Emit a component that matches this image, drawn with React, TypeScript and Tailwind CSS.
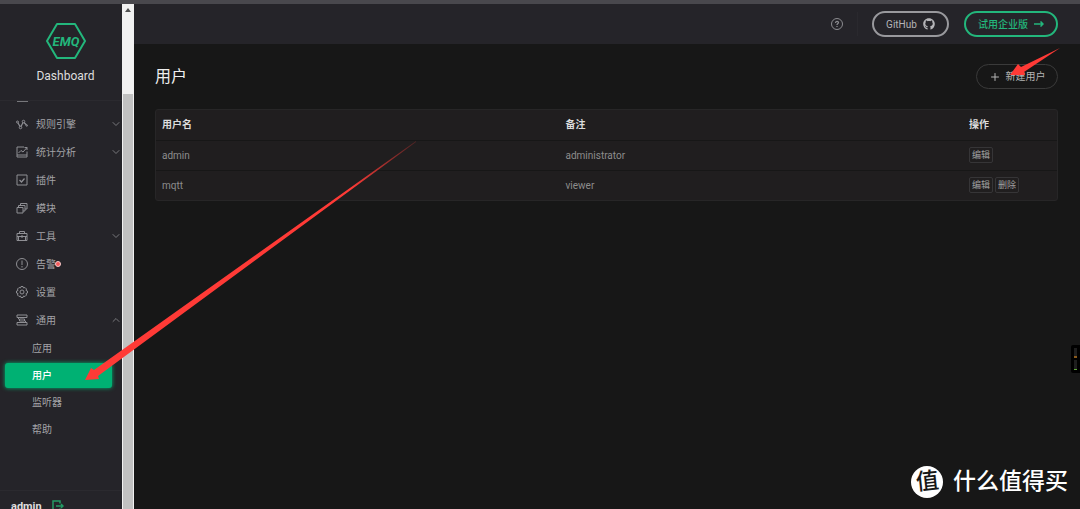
import type { ReactNode } from 'react';
import clsx from 'clsx';
import { ChevronDown, ChevronUp, Plus } from 'lucide-react';
import { FaGithub } from 'react-icons/fa';

interface MenuItem {
  label: string;
  icon: ReactNode;
  arrow?: 'down' | 'up';
  alarm?: boolean;
}

interface User {
  name: string;
  remark: string;
  actions: string[];
}

function Icon({ children }: { children: ReactNode }) {
  return (
    <svg
      viewBox="0 0 24 24"
      className="size-3 shrink-0 text-[#8f8f94]"
      fill="none"
      stroke="currentColor"
      strokeWidth={2}
      aria-hidden="true"
    >
      {children}
    </svg>
  );
}

const menu: MenuItem[] = [
  {
    label: '规则引擎',
    arrow: 'down',
    icon: (
      <Icon>
        <circle cx="3" cy="8" r="2" />
        <circle cx="9" cy="19" r="2.5" />
        <circle cx="15" cy="7" r="2.5" />
        <circle cx="21.5" cy="15" r="1.5" />
        <path d="M4 10l4 7M10 17l4-8M16 9l5 5" strokeWidth={2.5} />
      </Icon>
    ),
  },
  {
    label: '统计分析',
    arrow: 'down',
    icon: (
      <Icon>
        <path d="M16 2H2v20h20V11M2 18h20M5 14l5-5 4 3 8-9M17 3h5v5" />
      </Icon>
    ),
  },
  {
    label: '插件',
    icon: (
      <Icon>
        <path d="M2 2h20v20H2z" />
        <path d="M7 12l4 4 6-7" strokeWidth={2.5} />
      </Icon>
    ),
  },
  {
    label: '模块',
    icon: (
      <Icon>
        <path d="M2 11h12v11H2zM5 11V7h13v11h-4M9 7V3h13v11h-4" />
      </Icon>
    ),
  },
  {
    label: '工具',
    arrow: 'down',
    icon: (
      <Icon>
        <path d="M2 7h20v14H2zM7 7V3h10v4M2 13h20M12 10v6M5 13v8M19 13v8" />
      </Icon>
    ),
  },
  {
    label: '告警',
    alarm: true,
    icon: (
      <Icon>
        <circle cx="12" cy="12" r="11" />
        <path d="M12 5v9M12 16v3" />
      </Icon>
    ),
  },
  {
    label: '设置',
    icon: (
      <Icon>
        <path d="M9 4l1-3h4l1 3 3-1 3 3-1 3 3 1v4l-3 1 1 3-3 3-3-1-1 3h-4l-1-3-3 1-3-3 1-3-3-1v-4l3-1-1-3 3-3z" />
        <circle cx="12" cy="12" r="4" />
      </Icon>
    ),
  },
  {
    label: '通用',
    arrow: 'up',
    icon: (
      <Icon>
        <path d="M2 2h20v5H2zM2 17h20v5H2zM7 10h10v4H7zM5 7v3l3 2M19 17v-3l-3-2" />
      </Icon>
    ),
  },
];

const subMenu = ['应用', '用户', '监听器', '帮助'];

const users: User[] = [
  { name: 'admin', remark: 'administrator', actions: ['编辑'] },
  { name: 'mqtt', remark: 'viewer', actions: ['编辑', '删除'] },
];

function Logo() {
  return (
    <svg viewBox="0 0 40 36" className="h-9 w-10" role="img" aria-label="EMQ">
      <path
        d="M11 1h18L39 18 29 35H11L1 18z"
        fill="none"
        stroke="#23b77c"
        strokeWidth={2}
        strokeLinejoin="round"
      />
      <text x="20" y="23" textAnchor="middle" fill="#23b77c" className="text-[13px] font-bold italic">
        EMQ
      </text>
    </svg>
  );
}

function Sidebar() {
  return (
    <aside className="flex w-[122px] shrink-0 flex-col bg-[#252429]">
      <div className="flex h-[97px] shrink-0 flex-col items-center border-b border-[#2b2a2f] pt-[19px] pl-[9px]">
        <Logo />
        <div className="mt-2 text-[12px] leading-[18px] text-[#dedede]">Dashboard</div>
      </div>
      <nav className="flex-1 text-[10px] text-[#a3a3a7]">
        <div className="ml-[17px] h-px w-[11px] bg-[#77777b]" />
        <ul className="pt-2">
          {menu.map((item) => (
            <li key={item.label}>
              <a href="#" className="flex h-7 items-center pl-4">
                {item.icon}
                <span className="ml-2">{item.label}</span>
                {item.alarm && <i className="-ml-px size-[6px] rounded-full border border-[#f5c9c9] bg-[#f45b5b]" />}
                {item.arrow === 'down' && <ChevronDown className="ml-auto size-3 text-[#77777b]" />}
                {item.arrow === 'up' && <ChevronUp className="ml-auto size-3 text-[#77777b]" />}
              </a>
            </li>
          ))}
        </ul>
        <ul className="pt-px">
          {subMenu.map((label) => (
            <li key={label} className="flex h-[27px] items-center px-[5px]">
              <a
                href="#"
                className={clsx(
                  'flex h-[25px] w-[107px] items-center rounded-[3px] pl-[27px]',
                  label === '用户' && 'bg-[#00b173] font-medium text-white shadow-[0_0_4px_#00b173]',
                )}
              >
                {label}
              </a>
            </li>
          ))}
        </ul>
      </nav>
      <div className="flex h-[19px] shrink-0 items-start gap-[10px] border-t border-[#2b2a2f] pt-2 pl-[11px]">
        <span className="text-[11px] leading-4 font-bold text-[#dedede]">admin</span>
        <button type="button" aria-label="logout" className="pt-px">
          <svg viewBox="0 0 24 24" className="size-3" fill="none" stroke="#239a64" strokeWidth={3}>
            <path d="M16 7V2H2v20h14v-5M8 12h14M18 8l4 4-4 4" />
          </svg>
        </button>
      </div>
    </aside>
  );
}

function ScrollTrack() {
  return (
    <div className="flex w-3 shrink-0 flex-col bg-[#f1f1f1]">
      <div className="flex h-[90px] shrink-0 justify-center pt-1">
        <svg viewBox="0 0 6 4" className="h-1 w-[6px]" fill="#505050">
          <path d="M3 0l3 4H0z" />
        </svg>
      </div>
      <div className="mx-px flex-1 bg-[#c1c1c1]" />
    </div>
  );
}

function TopBar() {
  return (
    <header className="flex h-10 shrink-0 items-center justify-end bg-[#252429] pr-[22px] text-[10px]">
      <button type="button" aria-label="help" className="text-[#8c8c90]">
        <svg viewBox="0 0 24 24" className="size-3" fill="none" stroke="currentColor" strokeWidth={2}>
          <circle cx="12" cy="12" r="11" />
          <path d="M9 10c0-4 6-4 6-1 0 2-3 2-3 5M12 16v2" strokeWidth={2.5} />
        </svg>
      </button>
      <div className="mx-[14px] h-6 w-px bg-[#2a292e]" />
      <a
        href="#"
        className="mr-[15px] flex h-[26px] w-[77px] items-center justify-center gap-[6px] rounded-full border-2 border-[#99999d] text-[#b5b5b8]"
      >
        GitHub
        <FaGithub className="size-3" />
      </a>
      <a
        href="#"
        className="flex h-[26px] w-[94px] items-center justify-center gap-[6px] rounded-full border-2 border-[#23b77c] font-medium text-[#23b77c]"
      >
        试用企业版
        <svg viewBox="0 0 20 12" className="h-[6px] w-[10px]" fill="none" stroke="currentColor" strokeWidth={3}>
          <path d="M0 6h18M13 1l5 5-5 5" />
        </svg>
      </a>
    </header>
  );
}

function UserTable() {
  return (
    <div className="rounded-[3px] border border-[#272627] bg-[#201e1f]">
      <table className="w-full table-fixed text-left text-[10px] text-[#8d8d8d]">
        <colgroup>
          <col />
          <col />
          <col className="w-[94px]" />
        </colgroup>
        <thead>
          <tr className="h-[30px] border-b border-[#171717] text-[#dcdcdc]">
            <th className="pl-[6px] font-bold">用户名</th>
            <th className="pl-[6px] font-bold">备注</th>
            <th className="pl-[6px] font-bold">操作</th>
          </tr>
        </thead>
        <tbody>
          {users.map((user) => (
            <tr key={user.name} className="h-[30px] border-b border-[#171717] last:border-b-0">
              <td className="pl-[6px]">{user.name}</td>
              <td className="pl-[6px]">{user.remark}</td>
              <td className="pl-[6px]">
                <div className="flex gap-[2px]">
                  {user.actions.map((action) => (
                    <button
                      key={action}
                      type="button"
                      className="h-4 w-6 rounded-[2px] border border-[#363537] text-[9px] leading-3 text-[#a0a0a0]"
                    >
                      {action}
                    </button>
                  ))}
                </div>
              </td>
            </tr>
          ))}
        </tbody>
      </table>
    </div>
  );
}

function Arrows() {
  return (
    <>
      <svg viewBox="0 0 332 240" className="pointer-events-none absolute top-[141px] left-[85px] h-[240px] w-[332px]">
        <defs>
          <linearGradient id="fade" x1="0" y1="1" x2="1" y2="0">
            <stop offset="0.8" stopColor="#ff3a36" />
            <stop offset="1" stopColor="#ff3a36" stopOpacity="0.2" />
          </linearGradient>
        </defs>
        <path d="M0 239L6 227l3 2L331 0v1L13 235l1 3z" fill="url(#fade)" />
      </svg>
      <svg viewBox="0 0 52 30" className="pointer-events-none absolute top-[47px] right-[19px] h-[30px] w-[52px]">
        <path d="M1 28L9 17l3 3L51 1 15 25l1 3z" fill="#ff3a36" />
      </svg>
    </>
  );
}

function Watermark() {
  return (
    <div className="pointer-events-none absolute right-[12px] bottom-[11px] flex items-center gap-[10px] text-[23px] leading-8 font-medium text-white">
      <div className="flex size-8 items-center justify-center rounded-full bg-white text-[#171717]">
        <span className="-rotate-6">值</span>
      </div>
      <span>什么值得买</span>
    </div>
  );
}

function LevelMeter() {
  return (
    <div className="absolute top-[345px] right-0 flex h-7 w-[9px] flex-col items-center gap-[2px] rounded-l-[2px] bg-black pt-[3px]">
      <div className="h-[10px] w-[3px] border-b-2 border-[#8a5a1c] bg-[#1e1e1e]" />
      <div className="h-[10px] w-[3px] border-b border-[#5fa83a] bg-[#1e1e1e]" />
    </div>
  );
}

export default function App() {
  return (
    <div className="relative flex h-screen flex-col overflow-hidden bg-[#171717] font-['Roboto','Noto_Sans_CJK_SC',sans-serif]">
      <div className="h-1 shrink-0 bg-[#49484d]" />
      <div className="flex min-h-0 flex-1">
        <Sidebar />
        <ScrollTrack />
        <div className="flex min-w-0 flex-1 flex-col">
          <TopBar />
          <main className="pt-5 pr-[22px] pl-[21px]">
            <div className="mb-5 flex h-[25px] items-center justify-between">
              <h1 className="text-[16px] leading-6 text-[#eeeeee]">用户</h1>
              <button
                type="button"
                className="flex h-[25px] w-[82px] items-center justify-center gap-[5px] rounded-full border border-[#3a3a3a] text-[10px] text-[#b5b5b5]"
              >
                <Plus className="size-3" />
                新建用户
              </button>
            </div>
            <UserTable />
          </main>
        </div>
      </div>
      <Arrows />
      <LevelMeter />
      <Watermark />
    </div>
  );
}
